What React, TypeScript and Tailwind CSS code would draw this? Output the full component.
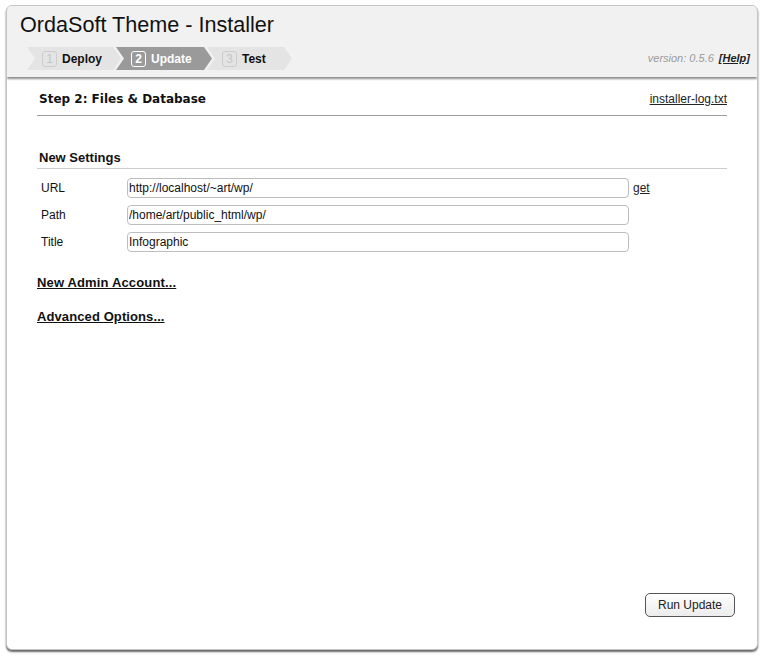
import React from "react";

const steps = [
  { n: 1, label: "Deploy", active: false, width: "w-[94px]" },
  { n: 2, label: "Update", active: true, width: "w-[96px]" },
  { n: 3, label: "Test", active: false, width: "w-[85px]" },
];

const fields = [
  { label: "URL", value: "http://localhost/~art/wp/", get: true },
  { label: "Path", value: "/home/art/public_html/wp/", get: false },
  { label: "Title", value: "Infographic", get: false },
];

function StepTab({
  n,
  label,
  active,
  width,
  first,
}: {
  n: number;
  label: string;
  active: boolean;
  width: string;
  first: boolean;
}) {
  return (
    <div
      className={`flex h-[23px] items-center pl-[15px] [clip-path:polygon(0_0,calc(100%-8px)_0,100%_50%,calc(100%-8px)_100%,0_100%,8px_50%)] ${width} ${
        first ? "" : "-ml-[5px]"
      } ${active ? "bg-[#9a9a9a] text-white" : "bg-[#e4e4e4] text-[#111]"}`}
    >
      <span
        className={`flex h-[16px] w-[15px] items-center justify-center rounded-[3px] border text-[12px] leading-none ${
          active ? "border-white font-bold text-white" : "border-[#cccccc] text-[#c4c4c4]"
        }`}
      >
        {n}
      </span>
      <span className="ml-[5px] text-[12px] font-bold">{label}</span>
    </div>
  );
}

export default function App() {
  return (
    <div className="min-h-[660px] bg-white pl-[6px] pt-[5px] font-['Liberation_Sans',Arial,sans-serif] text-[#222]">
      <div className="flex h-[645px] w-[752px] flex-col overflow-hidden rounded-[6px] border border-[#c4c4c4] bg-white shadow-[0_2px_2px_rgba(0,0,0,0.6)]">
        <header className="relative z-10 bg-[#f1f1f1] pb-[7px] pt-[5px] shadow-[0_2px_2px_rgba(0,0,0,0.45)]">
          <h1 className="pl-[13px] text-[21.6px] leading-[28px] text-[#111]">
            OrdaSoft Theme - Installer
          </h1>
          <div className="mt-[8px] flex items-center justify-between pl-[20px] pr-[7px]">
            <div className="flex">
              {steps.map((s, i) => (
                <StepTab key={s.n} {...s} first={i === 0} />
              ))}
            </div>
            <div className="text-[11px] italic">
              <span className="text-[#9a9a9a]">version: 0.5.6</span>
              <a href="#" className="ml-[5px] font-bold text-[#222] underline">
                [Help]
              </a>
            </div>
          </div>
        </header>

        <main className="px-[30px] pt-[14px]">
          <div className="flex items-center justify-between">
            <h2 className="pl-[2px] font-['DejaVu_Sans',Verdana,sans-serif] text-[12px] font-bold leading-[16px] text-[#111]">
              Step 2: Files &amp; Database
            </h2>
            <a href="#" className="text-[12px] leading-[16px] text-[#222] underline">
              installer-log.txt
            </a>
          </div>
          <hr className="mt-[8px] border-t border-[#9f9f9f]" />

          <h3 className="mt-[34px] pl-[2px] text-[13px] font-bold leading-[16px] text-[#111]">
            New Settings
          </h3>
          <hr className="mt-[2px] border-t border-[#cccccc]" />

          <div className="mt-[9px] flex flex-col gap-[7px]">
            {fields.map((f) => (
              <div key={f.label} className="flex items-center">
                <label className="w-[90px] pl-[4px] text-[12px] text-[#111]">{f.label}</label>
                <input
                  readOnly
                  value={f.value}
                  className="h-[20px] w-[502px] rounded-[4px] border border-[#bdbdbd] bg-white pl-[1px] text-[12px] text-[#111] outline-none"
                />
                {f.get && (
                  <a href="#" className="ml-[4px] text-[12px] text-[#222] underline">
                    get
                  </a>
                )}
              </div>
            ))}
          </div>

          <a
            href="#"
            className="mt-[23px] block text-[13px] font-bold leading-[16px] tracking-[0.15px] text-[#111] underline"
          >
            New Admin Account...
          </a>
          <a
            href="#"
            className="mt-[18px] block text-[13px] font-bold leading-[16px] tracking-[0.1px] text-[#111] underline"
          >
            Advanced Options...
          </a>
        </main>

        <div className="mt-auto flex justify-end pb-[32px] pr-[22px]">
          <button
            type="button"
            className="h-[24px] w-[90px] rounded-[5px] border border-[#555] bg-gradient-to-b from-white to-[#ececec] text-[12px] text-[#222]"
          >
            Run Update
          </button>
        </div>
      </div>
    </div>
  );
}
